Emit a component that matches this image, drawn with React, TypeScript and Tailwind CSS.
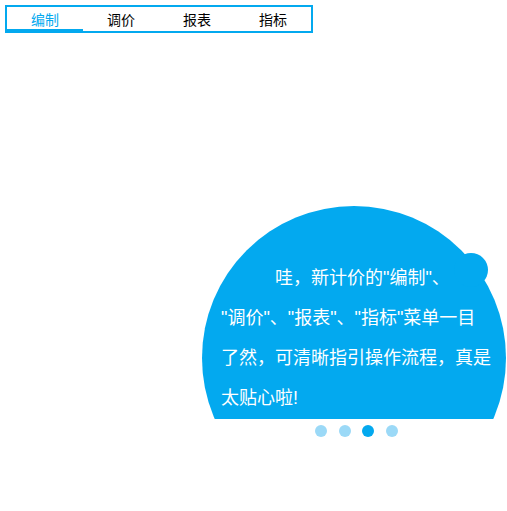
const tabs = ["编制", "调价", "报表", "指标"];

const lines = [
  '哇，新计价的"编制"、',
  '"调价"、"报表"、"指标"菜单一目',
  "了然，可清晰指引操作流程，真是",
  "太贴心啦!",
];

export default function App() {
  const active = 0;
  const page = 2;

  return (
    <div
      className="w-[507px] h-[511px] bg-white overflow-hidden"
      style={{ fontFamily: '"Noto Sans CJK SC", "Noto Sans", sans-serif' }}
    >
      <div className="ml-[5px] mt-[5px] w-[308px] h-[28px] border-2 border-[#03a9ef] flex">
        {tabs.map((t, i) => (
          <div
            key={t}
            className={`relative w-[76px] flex items-center justify-center text-[14px] leading-none ${
              i === active ? "text-[#03a9ef]" : "text-black"
            }`}
          >
            {t}
            {i === active && (
              <div className="absolute left-0 right-0 bottom-0 h-[2px] bg-[#03a9ef]" />
            )}
          </div>
        ))}
      </div>

      <div className="relative ml-[202px] mt-[173px] w-[305px] h-[213px] overflow-hidden">
        <div className="absolute left-0 top-0 w-[304px] h-[304px] rounded-full bg-[#03a9ef]" />
        <div className="absolute left-[252px] top-[47px] w-[34px] h-[34px] rounded-full bg-[#03a9ef]" />
        <div
          className="relative pl-[19px] pt-[52px] text-white text-[18px] leading-[40px] whitespace-nowrap"
          style={{ fontFamily: '"Liberation Sans", "Noto Sans CJK SC", sans-serif' }}
        >
          {lines.map((l, i) => (
            <div key={i} className={i === 0 ? "pl-[54px]" : ""}>
              {l}
            </div>
          ))}
        </div>
      </div>

      <div className="ml-[315px] mt-[6px] flex gap-[11.5px]">
        {[0, 1, 2, 3].map((d) => (
          <span
            key={d}
            className={`w-[12px] h-[12px] rounded-full ${
              d === page ? "bg-[#03a9ef]" : "bg-[#9bd9f7]"
            }`}
          />
        ))}
      </div>
    </div>
  );
}
